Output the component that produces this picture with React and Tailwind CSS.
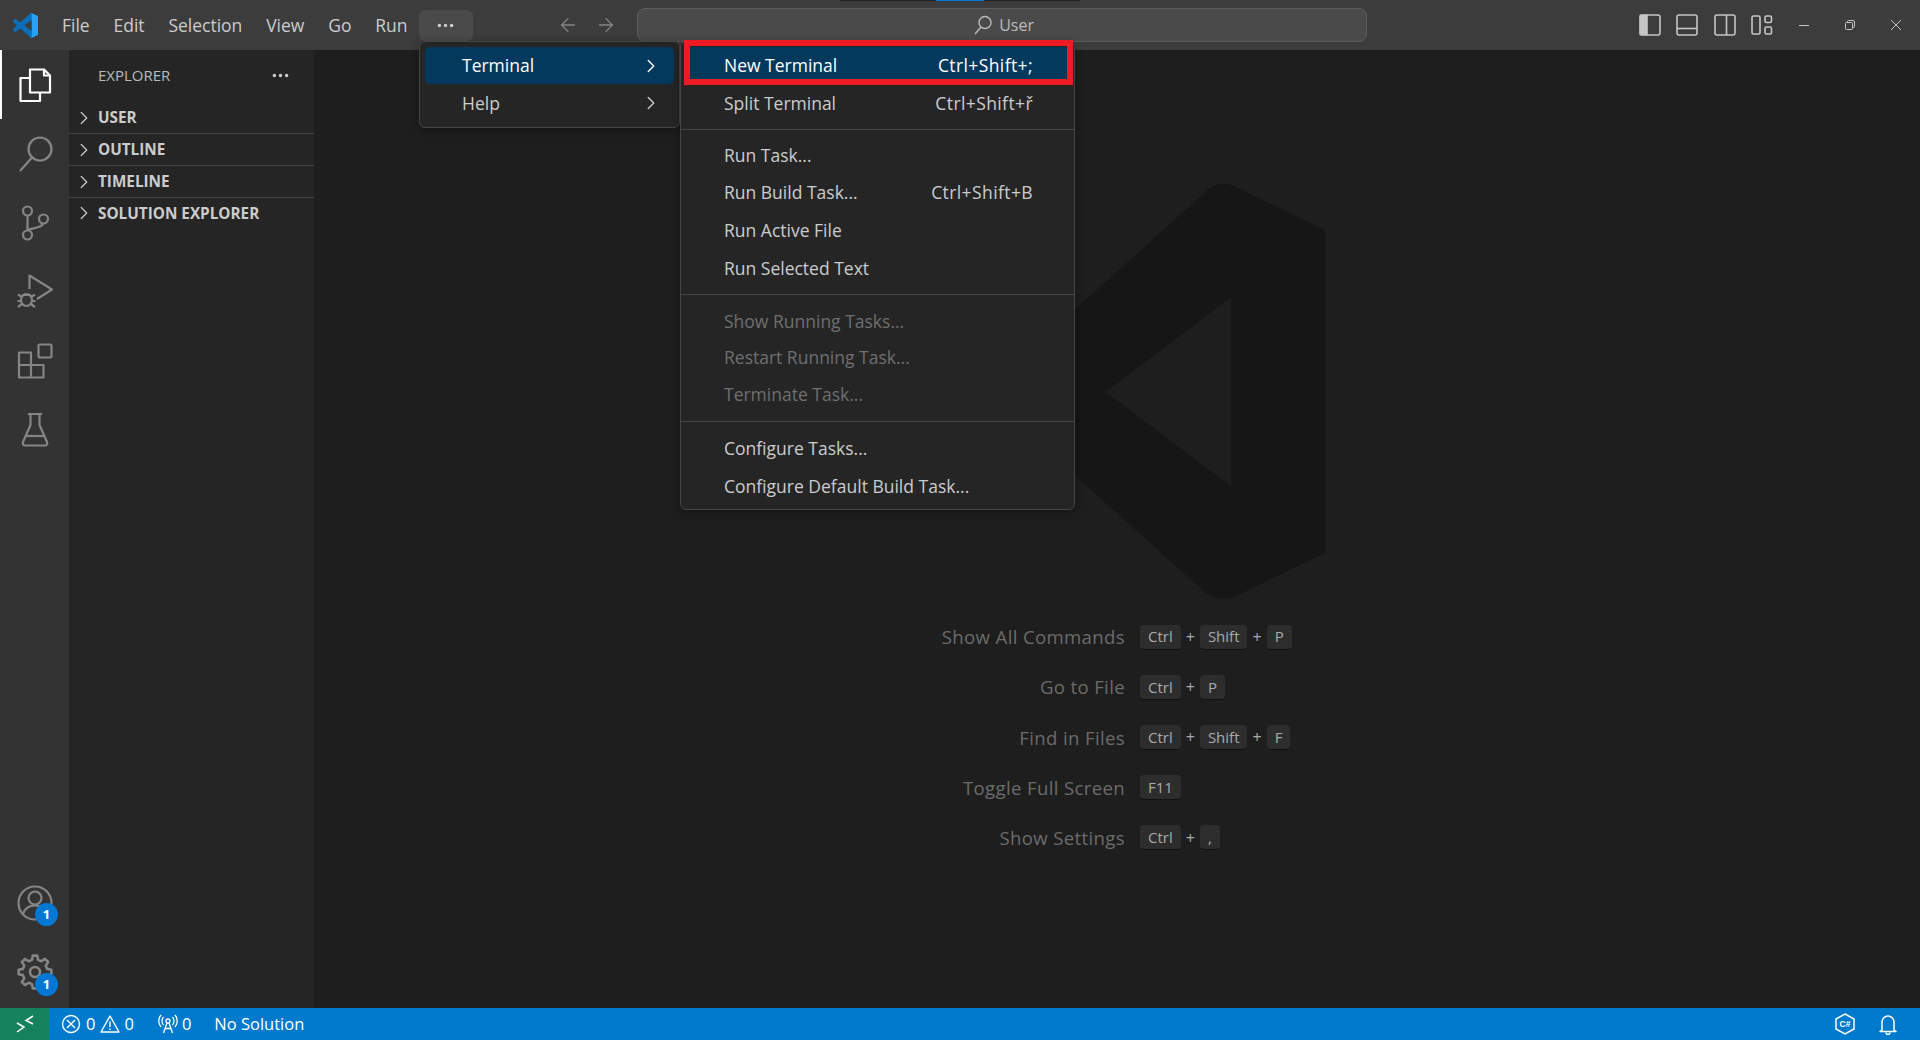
import React from "react";
import { ChevronRight, ArrowLeft, ArrowRight, Ellipsis } from "lucide-react";

const gearPath = (() => {
  const cx = 18, cy = 18, ro = 16.5, ri = 12.5, n = 8;
  const pts = [];
  for (let i = 0; i < n; i++) {
    const a = (i / n) * Math.PI * 2 - Math.PI / 2;
    const s = (Math.PI * 2) / n;
    [[-0.32, ri], [-0.17, ro], [0.17, ro], [0.32, ri]].forEach(([o, r]) => {
      const t = a + o * s;
      pts.push(`${(cx + r * Math.cos(t)).toFixed(2)} ${(cy + r * Math.sin(t)).toFixed(2)}`);
    });
  }
  return "M" + pts.join("L") + "Z";
})();

const Box = ({ children, className = "" }) => (
  <svg width="36" height="36" viewBox="0 0 36 36" fill="none" className={className} stroke="currentColor" strokeWidth="2.2" strokeLinejoin="round">
    {children}
  </svg>
);

function Activity() {
  const cell = "flex h-[69px] w-full items-center justify-center text-[#858585]";
  const badge = "absolute left-[35px] flex h-[23px] w-[23px] items-center justify-center rounded-full bg-[#0078d4] text-[13px] font-bold text-white";
  return (
    <div className="flex w-[69px] shrink-0 flex-col justify-between bg-[#333333]">
      <div className="flex flex-col">
        <div className={cell + " border-l-[2px] border-white pr-[2px] text-white"}>
          <Box>
            <path d="M13 2.5H27L33 8.5V25.5H13Z" />
            <path d="M27 2.5V8.5H33" />
            <path d="M13 11H3.500V34H23V25.5" />
          </Box>
        </div>
        <div className={cell}>
          <Box>
            <circle cx="23" cy="13" r="11.5" />
            <path d="M15 21.5L3 35" />
          </Box>
        </div>
        <div className={cell}>
          <Box>
            <circle cx="10.5" cy="6" r="4.5" />
            <circle cx="10.5" cy="30" r="4.5" />
            <circle cx="26.5" cy="14" r="4.5" />
            <path d="M10.5 10.5V25.5M26 18.5C25 23 17 22.5 10.5 25" />
          </Box>
        </div>
        <div className={cell}>
          <Box>
            <path d="M12.5 15V1.5L35 15.5L20 25" />
            <ellipse cx="9.5" cy="26" rx="5.5" ry="6" />
            <path d="M5 21H14M1 20.5L5 23M18 20.5L14 23M0.5 27H4.5M14.5 27H18.5M1 33L5 30M18 33L14 30" />
          </Box>
        </div>
        <div className={cell}>
          <Box>
            <rect x="21.5" y="1.5" width="13" height="13" rx="1" />
            <path d="M2 9.5H14V22H26.5V34.5H2Z" />
            <path d="M2 22H14V34.5" />
          </Box>
        </div>
        <div className={cell}>
          <Box>
            <path d="M11 2H25M13.5 2V13L6 30C5.2 32 6.3 33.5 8 33.5H28C29.7 33.5 30.800 32 30 30L22.5 13V2" />
            <path d="M9 24H27" />
          </Box>
        </div>
      </div>
      <div className="flex flex-col pb-[2px]">
        <div className={cell + " relative"}>
          <Box>
            <circle cx="18" cy="18" r="16.5" />
            <circle cx="18" cy="13" r="6.5" />
            <path d="M6 29C8 23 12 20.5 18 20.5C24 20.5 28 23 30 29" />
          </Box>
          <span className={badge + " top-[35px]"}>1</span>
        </div>
        <div className={cell + " relative"}>
          <Box>
            <path d={gearPath} strokeWidth="2.6" />
            <circle cx="18" cy="18" r="5" strokeWidth="2.6" />
          </Box>
          <span className={badge + " top-[36px]"}>1</span>
        </div>
      </div>
    </div>
  );
}

const SectionRow = ({ label, last }) => (
  <div className={"flex items-center " + (last ? "h-[30px]" : "h-[32px] border-b border-[#434343]")}>
    <ChevronRight size={22} strokeWidth={1.3} className="ml-[4px] shrink-0 text-[#cccccc]" />
    <span className="ml-[3px] text-[15.3px] font-bold text-[#cccccc]">{label}</span>
  </div>
);

function Sidebar() {
  return (
    <div className="w-[245px] shrink-0 bg-[#252526]">
      <div className="flex h-[50px] items-center justify-between pl-[29px] pr-[23px]">
        <span className="text-[15px] text-[#bbbbbb]">EXPLORER</span>
        <Ellipsis size={21} className="text-[#cccccc]" />
      </div>
      <div className="mt-[2px]">
        <SectionRow label="USER" />
        <SectionRow label="OUTLINE" />
        <SectionRow label="TIMELINE" />
        <SectionRow label="SOLUTION EXPLORER" last />
      </div>
    </div>
  );
}

const Key = ({ children }) => (
  <span className="flex h-[25px] items-center rounded-[4px] border-b border-[#111111] bg-[#2d2d2d] px-[8px] text-[15px] text-[#aaaaaa]">{children}</span>
);

const Plus = () => <span className="text-[16px] text-[#aaaaaa]">+</span>;

const Shortcut = ({ label, keys }) => (
  <div className="flex h-[50.2px] items-center">
    <span className="w-[811px] text-right text-[18.6px] tracking-[0.35px] text-[#6b6b6b]">{label}</span>
    <div className="ml-[15px] flex items-center gap-[5px]">
      {keys.map((k, i) => (
        <React.Fragment key={i}>
          {i > 0 && <Plus />}
          <Key>{k}</Key>
        </React.Fragment>
      ))}
    </div>
  </div>
);

function Editor() {
  return (
    <div className="relative flex-1 overflow-hidden bg-[#1e1e1e]">
      <svg className="absolute left-[686px] top-[133px]" width="340" height="420" viewBox="0 0 340 420" fill="#161616">
        <path
          fillRule="evenodd"
          d="M211 4Q222 -3 236 4L325 47V370L236 413Q222 420 206 410L60 279L20 318V100L60 140ZM106 209L231 303V114Z"
        />
      </svg>
      <div className="relative pt-[562px]">
        <Shortcut label="Show All Commands" keys={["Ctrl", "Shift", "P"]} />
        <Shortcut label="Go to File" keys={["Ctrl", "P"]} />
        <Shortcut label="Find in Files" keys={["Ctrl", "Shift", "F"]} />
        <Shortcut label="Toggle Full Screen" keys={["F11"]} />
        <Shortcut label="Show Settings" keys={["Ctrl", ","]} />
      </div>
    </div>
  );
}

const PanelIcon = ({ children }) => (
  <svg width="22" height="22" viewBox="0 0 22 22" fill="none" stroke="#c5c5c5" strokeWidth="1.6">{children}</svg>
);

function TitleBar() {
  return (
    <div className="relative flex h-[50px] shrink-0 items-center bg-[#3c3c3c] text-[17.5px] text-[#cccccc]">
      <div className="absolute left-[840px] top-0 h-px w-[240px] bg-[#222222]" />
      <div className="absolute left-[936px] top-0 h-px w-[48px] bg-[#0078d4]" />
      <svg className="ml-[13px] shrink-0" width="25" height="25" viewBox="0 0 24 24">
        <path fill="#0a6fb8" d="M23.15 2.587L18.21.21a1.494 1.494 0 0 0-1.705.29l-9.46 8.63-4.12-3.128a.999.999 0 0 0-1.276.057L.327 7.261A1 1 0 0 0 .326 8.74L3.899 12 .326 15.26a1 1 0 0 0 .001 1.479L1.65 17.94a.999.999 0 0 0 1.276.057l4.12-3.128 9.46 8.63a1.492 1.492 0 0 0 1.704.29l4.942-2.377A1.5 1.5 0 0 0 24 20.06V3.939a1.5 1.5 0 0 0-.85-1.352zm-5.146 14.861L10.826 12l7.178-5.448v10.896z" />
        <path fill="#23a3f0" d="M16.5.5a1.494 1.494 0 0 1 1.71-.29l4.94 2.377A1.5 1.5 0 0 1 24 3.94v16.12a1.5 1.5 0 0 1-.85 1.352l-4.94 2.378a1.492 1.492 0 0 1-1.71-.29 1 1 0 0 0 1.5-.6V1.1a1 1 0 0 0-1.5-.6z" />
      </svg>
      <div className="ml-[24px] flex items-center gap-[23.8px]">
        <span>File</span>
        <span>Edit</span>
        <span>Selection</span>
        <span>View</span>
        <span>Go</span>
        <span>Run</span>
      </div>
      <div className="ml-[11px] flex h-[31px] w-[54px] items-center justify-center rounded-[6px] bg-[#4a4a4a]">
        <Ellipsis size={21} className="text-[#cccccc]" />
      </div>
      <div className="ml-[84px] flex items-center gap-[16px] text-[#858585]">
        <ArrowLeft size={22} strokeWidth={1.4} />
        <ArrowRight size={22} strokeWidth={1.4} />
      </div>
      <div className="ml-[20px] flex h-[34px] w-[730px] items-center justify-center gap-[6px] rounded-[8px] border border-[#5c5c5c] bg-[#4a4a4a] pl-[4px] text-[16px] text-[#bbbbbb]">
        <svg width="20" height="20" viewBox="0 0 20 20" fill="none" stroke="#bbbbbb" strokeWidth="1.4">
          <circle cx="12" cy="7.5" r="6" />
          <path d="M8 12L2 19" />
        </svg>
        <span>User</span>
      </div>
      <div className="ml-[272px] flex items-center gap-[15.5px]">
        <PanelIcon>
          <rect x="1" y="1" width="20" height="20" rx="2" />
          <path d="M1.5 1.5H8V20.5H1.5Z" fill="#c5c5c5" />
        </PanelIcon>
        <PanelIcon>
          <rect x="1" y="1" width="20" height="20" rx="2" />
          <path d="M1 14.5H21" />
        </PanelIcon>
        <PanelIcon>
          <rect x="1" y="1" width="20" height="20" rx="2" />
          <path d="M12.5 1V21" />
        </PanelIcon>
        <PanelIcon>
          <rect x="1" y="2" width="8" height="18" rx="1.5" />
          <rect x="14" y="2" width="6.5" height="6.5" rx="1.5" />
          <rect x="14" y="13" width="6.5" height="7" rx="1.5" />
        </PanelIcon>
      </div>
      <div className="ml-[26px] flex items-center gap-[36px]">
        <svg width="10" height="10" viewBox="0 0 10 10" stroke="#c5c5c5" fill="none"><path d="M0 5.5H10" /></svg>
        <svg width="10" height="10" viewBox="0 0 10 10" stroke="#c5c5c5" fill="none"><rect x="0.5" y="2.500" width="7" height="7" rx="1" /><path d="M2.5 2.5V1.5Q2.5 .5 3.5 .5H8Q9.500 .5 9.500 2V6.500Q9.500 7.500 8 7.500" /></svg>
        <svg width="10" height="10" viewBox="0 0 10 10" stroke="#c5c5c5" fill="none"><path d="M0 0L10 10M10 0L0 10" /></svg>
      </div>
    </div>
  );
}

function MenuRow({ label, hint, h = 37, active, disabled, sub }) {
  return (
    <div
      style={{ height: h }}
      className={
        "mx-[5px] flex items-center justify-between rounded-[5px] text-[17.5px] " +
        (sub ? "pl-[37px] pr-[12px] " : "pl-[38px] pr-[36px] ") +
        (active ? "bg-[#04395e] text-white" : disabled ? "text-[#6f6f6f]" : "text-[#cccccc]")
      }
    >
      <span>{label}</span>
      {hint && <span className="tracking-[0.4px]">{hint}</span>}
      {sub && <ChevronRight size={22} strokeWidth={1.5} />}
    </div>
  );
}

const Sep = ({ top, bottom }) => <div style={{ marginTop: top, marginBottom: bottom }} className="h-px bg-[#454545]" />;

function Menus() {
  return (
    <div className="absolute left-[419px] top-[41px] flex items-start">
      <div className="h-[87px] w-[261px] rounded-[6px] border border-[#454545] bg-[#252526] pt-[5px] shadow-[0_2px_8px_rgba(0,0,0,0.36)]">
        <MenuRow label="Terminal" active sub />
        <MenuRow label="Help" h={38} sub />
      </div>
      <div className="relative w-[395px] rounded-[6px] border border-[#454545] bg-[#252526] pb-[4px] pt-[5px] shadow-[0_2px_8px_rgba(0,0,0,0.36)]">
        <MenuRow label="New Terminal" hint="Ctrl+Shift+;" active />
        <MenuRow label="Split Terminal" hint="Ctrl+Shift+ř" h={38} />
        <Sep top={7} bottom={6} />
        <MenuRow label="Run Task..." h={38} />
        <MenuRow label="Run Build Task..." hint="Ctrl+Shift+B" />
        <MenuRow label="Run Active File" h={38} />
        <MenuRow label="Run Selected Text" h={38} />
        <Sep top={7} bottom={8} />
        <MenuRow label="Show Running Tasks..." h={36} disabled />
        <MenuRow label="Restart Running Task..." h={37} disabled />
        <MenuRow label="Terminate Task..." h={36} disabled />
        <Sep top={9} bottom={8} />
        <MenuRow label="Configure Tasks..." />
        <MenuRow label="Configure Default Build Task..." h={38} />
        <div className="absolute left-[3px] top-[-2px] h-[45px] w-[389px] border-[6px] border-[#ed1c24]" />
      </div>
    </div>
  );
}

function StatusBar() {
  return (
    <div className="flex h-[32px] shrink-0 items-center bg-[#007acc] text-[16.5px] text-white">
      <div className="flex h-full w-[49px] items-center justify-center bg-[#16825d]">
        <svg width="20" height="20" viewBox="0 0 20 20" fill="none" stroke="white" strokeWidth="1.5">
          <path d="M2 9L9 13L2 18" />
          <path d="M18 2L11 6.5L18 10" />
        </svg>
      </div>
      <svg className="ml-[12px]" width="20" height="20" viewBox="0 0 20 20" fill="none" stroke="white" strokeWidth="1.4">
        <circle cx="10" cy="10" r="8.5" />
        <path d="M6 6L14 14M14 6L6 14" />
      </svg>
      <span className="ml-[5px]">0</span>
      <svg className="ml-[5px]" width="20" height="20" viewBox="0 0 20 20" fill="none" stroke="white" strokeWidth="1.4">
        <path d="M10 2L19 18H1Z" strokeLinejoin="round" />
        <path d="M10 7.5V13M10 14.5V16" />
      </svg>
      <span className="ml-[4px]">0</span>
      <svg className="ml-[24px]" width="20" height="20" viewBox="0 0 20 20" fill="none" stroke="white" strokeWidth="1.3">
        <circle cx="10" cy="7" r="2" />
        <path d="M9 9L5.5 19M11 9L14.5 19M7 14.5H13M5.5 3C3.5 5 3.5 9 5.5 11M14.5 3C16.5 5 16.5 9 14.5 11M3 1C0 4.500 0 9.500 3 13M17 1C20 4.500 20 9.500 17 13" />
      </svg>
      <span className="ml-[4px]">0</span>
      <span className="ml-[23px]">No Solution</span>
      <div className="flex-1" />
      <svg width="20" height="22" viewBox="0 0 20 22" fill="none" stroke="white" strokeWidth="1.5">
        <path d="M10 1L19 6V16L10 21L1 16V6Z" />
        <text x="10" y="14" textAnchor="middle" fill="white" stroke="none" fontSize="8.5" fontWeight="700" fontFamily="Liberation Sans, sans-serif">C#</text>
      </svg>
      <svg className="ml-[24px] mr-[23px]" width="18" height="21" viewBox="0 0 18 21" fill="none" stroke="white" strokeWidth="1.5">
        <path d="M3 16V8A6 6 0 0 1 15 8V16L17 17.500H1Z" strokeLinejoin="round" />
        <path d="M7 18.500A2 2 0 0 0 11 18.500" />
      </svg>
    </div>
  );
}

export default function App() {
  return (
    <div className="relative flex h-[1040px] w-[1920px] flex-col overflow-hidden bg-[#1e1e1e] font-['Open_Sans',sans-serif]">
      <TitleBar />
      <div className="flex min-h-0 flex-1">
        <Activity />
        <Sidebar />
        <Editor />
      </div>
      <StatusBar />
      <Menus />
    </div>
  );
}
